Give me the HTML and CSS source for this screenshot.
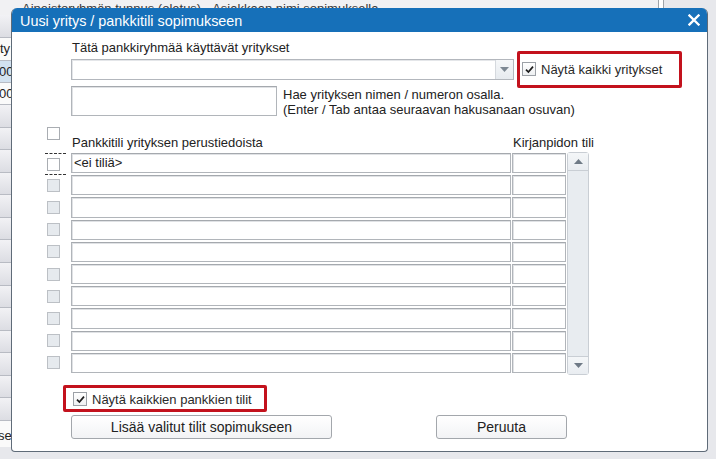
FILE: index.html
```html
<!DOCTYPE html>
<html lang="fi">
<head>
<meta charset="utf-8">
<title>Uusi yritys / pankkitili sopimukseen</title>
<link rel="stylesheet" href="styles.css">
</head>
<body>
<div class="page">
  <div class="page-head">
    <div class="ph-text"><div class="ph-clip"><span>Aineistoryhmän tunnus (oletus)</span><span class="ph-b">Asiakkaan nimi sopimuksella</span></div></div>
    <div class="ph-gap"></div>
    <div class="ph-edge"></div>
  </div>
  <div class="page-main">
    <div class="side">
      <div class="side-cell grey tall"></div>
      <div class="side-cell white tall"><span class="st i3">ity</span></div>
      <div class="side-cell blue"><span class="st">0000</span></div>
      <div class="side-cell white"><span class="st">0000</span></div>
      <div class="side-cell grey std"></div>
      <div class="side-cell grey std"></div>
      <div class="side-cell grey std"></div>
      <div class="side-cell grey std"></div>
      <div class="side-cell grey std"></div>
      <div class="side-cell grey std"></div>
      <div class="side-cell grey std"></div>
      <div class="side-cell grey std"></div>
      <div class="side-cell grey std"></div>
      <div class="side-cell grey std"></div>
      <div class="side-cell grey std"></div>
      <div class="side-cell grey std"></div>
      <div class="side-cell grey std"></div>
      <div class="side-cell grey std"></div>
      <div class="side-cell white last"><span class="st i2">se</span></div>
    </div>
  </div>
</div>

<div class="dialog">
  <div class="titlebar">
    <span class="title">Uusi yritys / pankkitili sopimukseen</span>
    <svg class="close" width="12" height="12" viewBox="0 0 12 12"><path d="M1.5 1.5L10.5 10.5M10.5 1.5L1.5 10.5" stroke="#fff" stroke-width="2.3" stroke-linecap="square"/></svg>
  </div>
  <div class="dlg-body">
    <div class="row-company">
      <div class="company-col">
        <div class="lbl">Tätä pankkiryhmää käyttävät yritykset</div>
        <div class="select">
          <span class="select-btn"><svg width="9" height="5" viewBox="0 0 9 5"><path d="M0 0H9L4.5 5Z" fill="#7d8893"/></svg></span>
        </div>
      </div>
      <div class="hl hl-top">
        <span class="cb checked"><svg width="11" height="11" viewBox="0 0 11 11"><path d="M2 5.6L4.4 8L9 2.6" fill="none" stroke="#1e1e1e" stroke-width="1.7"/></svg></span>
        <span class="cb-lbl">Näytä kaikki yritykset</span>
      </div>
    </div>

    <div class="row-search">
      <div class="input search"></div>
      <div class="hint">Hae yrityksen nimen / numeron osalla.<br>(Enter / Tab antaa seuraavan hakusanaan osuvan)</div>
    </div>

    <div class="thead">
      <div class="th-check"><span class="cb"></span></div>
      <div class="th-name">Pankkitili yrityksen perustiedoista</div>
      <div class="th-acc">Kirjanpidon tili</div>
    </div>

    <div class="table">
      <div class="rows">
        <div class="trow">
          <div class="tcheck focus"><span class="cb"></span></div>
          <div class="input tname">&lt;ei tiliä&gt;</div>
          <div class="input tacc"></div>
        </div>
        <div class="trow"><div class="tcheck"><span class="cb dim"></span></div><div class="input tname"></div><div class="input tacc"></div></div>
        <div class="trow"><div class="tcheck"><span class="cb dim"></span></div><div class="input tname"></div><div class="input tacc"></div></div>
        <div class="trow"><div class="tcheck"><span class="cb dim"></span></div><div class="input tname"></div><div class="input tacc"></div></div>
        <div class="trow"><div class="tcheck"><span class="cb dim"></span></div><div class="input tname"></div><div class="input tacc"></div></div>
        <div class="trow"><div class="tcheck"><span class="cb dim"></span></div><div class="input tname"></div><div class="input tacc"></div></div>
        <div class="trow"><div class="tcheck"><span class="cb dim"></span></div><div class="input tname"></div><div class="input tacc"></div></div>
        <div class="trow"><div class="tcheck"><span class="cb dim"></span></div><div class="input tname"></div><div class="input tacc"></div></div>
        <div class="trow"><div class="tcheck"><span class="cb dim"></span></div><div class="input tname"></div><div class="input tacc"></div></div>
        <div class="trow"><div class="tcheck"><span class="cb dim"></span></div><div class="input tname"></div><div class="input tacc"></div></div>
      </div>
      <div class="scrollbar">
        <div class="sb-up"><svg width="9" height="5" viewBox="0 0 9 5"><path d="M0 5H9L4.5 0Z" fill="#6f7a86"/></svg></div>
        <div class="sb-track"></div>
        <div class="sb-down"><svg width="9" height="5" viewBox="0 0 9 5"><path d="M0 0H9L4.5 5Z" fill="#6f7a86"/></svg></div>
      </div>
    </div>

    <div class="hl hl-bottom">
      <span class="cb checked"><svg width="11" height="11" viewBox="0 0 11 11"><path d="M2 5.6L4.4 8L9 2.6" fill="none" stroke="#1e1e1e" stroke-width="1.7"/></svg></span>
      <span class="cb-lbl">Näytä kaikkien pankkien tilit</span>
    </div>

    <div class="actions">
      <button class="btn btn-add" type="button">Lisää valitut tilit sopimukseen</button>
      <button class="btn btn-cancel" type="button">Peruuta</button>
    </div>
  </div>
</div>
</body>
</html>
```

FILE: styles.css
```css
html, body {
  margin: 0;
  padding: 0;
}
body {
  width: 716px;
  height: 459px;
  overflow: hidden;
  background: #e7e8ec;
  font-family: "Liberation Sans", Arial, sans-serif;
  font-size: 13px;
  color: #222;
  position: relative;
}

/* ---------- background page ---------- */
.page {
  display: flex;
  flex-direction: column;
}
.page-head {
  display: flex;
  height: 15px;
  background: #f1f1f3;
}
.ph-text {
  width: 636px;
  padding-left: 22px;
  border-right: 1px solid #9ea3a8;
}
.ph-clip {
  height: 8px;
  overflow: hidden;
  white-space: nowrap;
  line-height: 18px;
  color: #3a3a3a;
}
.ph-b {
  margin-left: 11px;
}
.ph-gap {
  width: 4px;
  background: #fff;
}
.ph-edge {
  flex: 1;
  border-left: 1px solid #9ea3a8;
  background: #e7e8ec;
}
.page-main {
  display: flex;
}
.side {
  width: 60px;
  display: flex;
  flex-direction: column;
}
.side-cell {
  box-sizing: border-box;
  height: 22px;
  border-bottom: 1px solid #b8bbc3;
  white-space: nowrap;
  overflow: hidden;
  line-height: 21px;
}
.side-cell.tall { height: 23px; }
.side-cell.std { height: 22.57px; }
.side-cell.last { height: 26px; border-bottom: 0; line-height: 30px; }
.side-cell.grey { background: linear-gradient(#f2f2f5, #dcdde3); }
.side-cell.white { background: #fafafa; }
.side-cell.blue { background: #d2e1ef; }
.st { display: block; text-indent: -1px; color: #222; }
.st.i3 { text-indent: -3px; }
.st.i2 { text-indent: -2px; }

/* ---------- dialog ---------- */
.dialog {
  position: absolute;
  left: 11px;
  top: 8px;
  width: 697px;
  height: 444px;
  box-sizing: border-box;
  background: #fff;
  border: 1px solid #5f6b78;
  border-top: 0;
  border-radius: 6px 6px 4px 4px;
  overflow: hidden;
  display: flex;
  flex-direction: column;
}
.titlebar {
  height: 24px;
  flex: none;
  background: #1670b9;
  display: flex;
  align-items: center;
  justify-content: space-between;
  padding: 0 7px 0 8px;
}
.title {
  color: #fff;
  font-size: 14.4px;
  line-height: 18px;
  padding-top: 1px;
}
.close {
  display: block;
}
.dlg-body {
  display: flex;
  flex-direction: column;
}

/* company row */
.row-company {
  display: flex;
  margin-top: 8px;
}
.company-col {
  margin-left: 59px;
  width: 443px;
  display: flex;
  flex-direction: column;
}
.lbl {
  line-height: 16px;
  padding-left: 1px;
  margin-bottom: 3px;
  white-space: nowrap;
}
.select {
  box-sizing: border-box;
  height: 21px;
  border: 1px solid #b3b7bd;
  box-shadow: inset 1px 1px 0 #e4e6e9;
  background: #fff;
  display: flex;
  justify-content: flex-end;
}
.select-btn {
  width: 17px;
  border-left: 1px solid #d5d9de;
  background: linear-gradient(#f5f7f9, #e7ebef);
  display: flex;
  align-items: center;
  justify-content: center;
}
.select-btn svg { display: block; }

.hl {
  box-sizing: border-box;
  border: 3px solid #c3121d;
  border-radius: 2px;
  display: flex;
  align-items: center;
}
.hl-top {
  margin-left: 3px;
  margin-top: 11px;
  margin-bottom: -8px;
  width: 165px;
  height: 37px;
  padding-left: 2px;
  padding-bottom: 1px;
}
.cb {
  box-sizing: border-box;
  width: 13px;
  height: 13px;
  border: 1px solid #a9adb2;
  background: #fff;
  display: flex;
  align-items: center;
  justify-content: center;
  flex: none;
}
.cb.checked {
  width: 14px;
  height: 14px;
  border-color: #9ca1a7;
  background: linear-gradient(#ffffff, #eef0f2);
}
.cb svg { display: block; }
.cb.dim {
  background: #e6eaee;
  border-color: #bcc0c5;
}
.cb-lbl {
  margin-left: 5px;
  white-space: nowrap;
  color: #2a2a2a;
  line-height: 16px;
  padding-top: 2px;
}

/* search row */
.row-search {
  display: flex;
  margin-top: 6px;
  margin-left: 59px;
}
.input {
  box-sizing: border-box;
  border: 1px solid #b1b5ba;
  border-top-color: #a5a9ae;
  box-shadow: inset 1px 1px 0 #e0e2e5;
  background: #fff;
}
.search {
  width: 206px;
  height: 30px;
}
.hint {
  margin-left: 6px;
  line-height: 15px;
  white-space: nowrap;
  padding-top: 1px;
}

/* table header */
.thead {
  display: flex;
  margin-top: 10px;
  height: 24px;
}
.th-check {
  margin-left: 35px;
  width: 24px;
}
.th-name,
.th-acc {
  align-self: flex-end;
  line-height: 16px;
  white-space: nowrap;
  padding-left: 1px;
}
.th-name { width: 440px; }

/* table */
.table {
  display: flex;
  margin-top: 1px;
  height: 223px;
}
.rows {
  padding-top: 1px;
  display: flex;
  flex-direction: column;
  gap: 2px;
}
.trow {
  display: flex;
  height: 20.2px;
}
.tcheck {
  box-sizing: border-box;
  margin-left: 33px;
  width: 21px;
  display: flex;
  align-items: center;
  padding-left: 2px;
}
.tcheck.focus {
  border-top: 1px dashed #333;
  border-bottom: 1px dashed #333;
  margin-bottom: -1px;
  height: 22px;
}
.tname {
  margin-left: 5px;
  width: 440px;
  padding-left: 2px;
  line-height: 18px;
  white-space: nowrap;
}
.tacc {
  margin-left: 1px;
  width: 54px;
}
.scrollbar {
  box-sizing: border-box;
  margin-left: 1px;
  width: 22px;
  height: 223px;
  border: 1px solid #c9ced4;
  border-radius: 3px;
  background: #e8ecf0;
  display: flex;
  flex-direction: column;
}
.sb-up,
.sb-down {
  height: 17px;
  display: flex;
  align-items: center;
  justify-content: center;
  background: linear-gradient(#f4f6f8, #e9edf1);
}
.sb-up { border-bottom: 1px solid #c9ced4; }
.sb-down { border-top: 1px solid #c9ced4; }
.sb-up svg, .sb-down svg { display: block; }
.sb-track { flex: 1; }

/* bottom */
.hl-bottom {
  margin-top: 10px;
  margin-left: 51px;
  width: 204px;
  height: 27px;
  padding-left: 7px;
  padding-top: 1px;
}
.actions {
  display: flex;
  margin-top: 3px;
  margin-left: 59px;
}
.btn {
  box-sizing: border-box;
  height: 24px;
  border: 1px solid #a3a7ac;
  border-radius: 3px;
  background: linear-gradient(#ffffff, #f2f3f5);
  font-family: "Liberation Sans", Arial, sans-serif;
  font-size: 14px;
  color: #222;
  padding: 0;
  line-height: 20px;
}
.btn-add { width: 261px; }
.btn-cancel { width: 131px; margin-left: 104px; }
```
